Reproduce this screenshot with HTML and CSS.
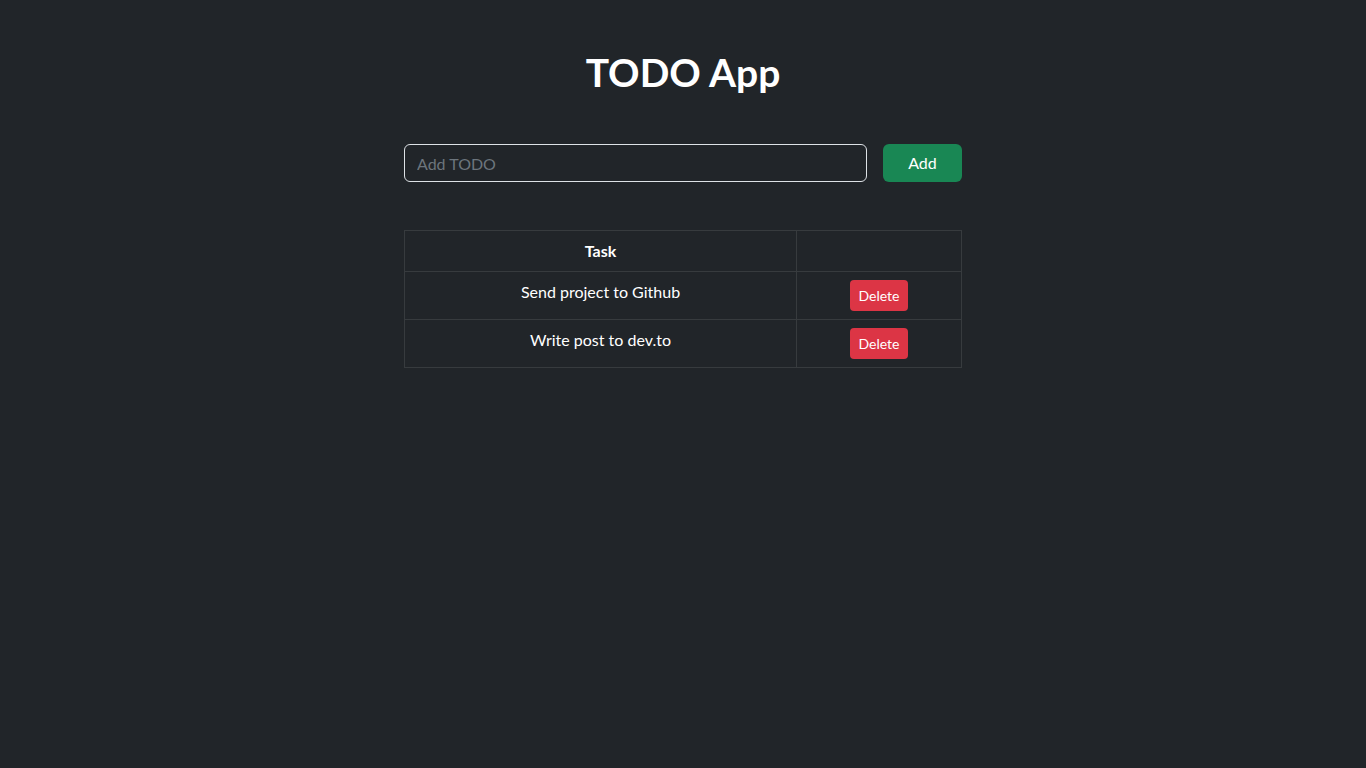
FILE: index.html
```html
<!DOCTYPE html>
<html lang="en">
<head>
<meta charset="utf-8">
<title>TODO App</title>
<link rel="stylesheet" href="styles.css">
</head>
<body>
<main class="app">
  <h1 class="title">TODO App</h1>
  <form class="add-form">
    <input class="add-input" type="text" placeholder="Add TODO">
    <button class="btn btn-success" type="button">Add</button>
  </form>
  <table class="todo-table">
    <thead>
      <tr><th class="col-task">Task</th><th class="col-action"></th></tr>
    </thead>
    <tbody>
      <tr><td>Send project to Github</td><td><button class="btn btn-danger" type="button">Delete</button></td></tr>
      <tr><td>Write post to dev.to</td><td><button class="btn btn-danger" type="button">Delete</button></td></tr>
    </tbody>
  </table>
</main>
</body>
</html>
```
FILE: styles.css
```css
* { box-sizing: border-box; }
html, body { height: 100%; }
body {
  margin: 0;
  background: #212529;
  color: #ffffff;
  font-family: Lato, "Open Sans", sans-serif;
  font-size: 16px;
  line-height: 1.5;
}
.app {
  width: 558px;
  margin: 0 auto;
  padding-top: 48px;
}
.title {
  margin: 0 0 48px;
  text-align: center;
  font-size: 39px;
  font-weight: 700;
  line-height: 48px;
}
.add-form {
  display: flex;
  gap: 16px;
  margin-bottom: 48px;
}
.add-input {
  flex: 1;
  height: 38px;
  padding: 6px 12px;
  background: #212529;
  color: #fff;
  border: 1px solid #dee2e6;
  border-radius: 6px;
  font: inherit;
  outline: none;
}
.add-input::placeholder { color: #6c757d; }
.btn {
  border: 0;
  border-radius: 6px;
  color: #fff;
  font: inherit;
  cursor: pointer;
}
.btn-success {
  background: #198754;
  width: 79px;
  height: 38px;
}
.btn-danger {
  display: block;
  margin: 0 auto;
  background: #dc3545;
  font-size: 14px;
  width: 58px;
  height: 31px;
  border-radius: 4px;
  padding: 0;
}
.todo-table {
  width: 100%;
  border-collapse: collapse;
  border: 1px solid #373b3e;
}
.todo-table th, .todo-table td {
  border: 1px solid #373b3e;
  padding: 8px;
  text-align: center;
  vertical-align: top;
}
.todo-table th { font-weight: 700; }
.col-task { width: 392px; }
```
